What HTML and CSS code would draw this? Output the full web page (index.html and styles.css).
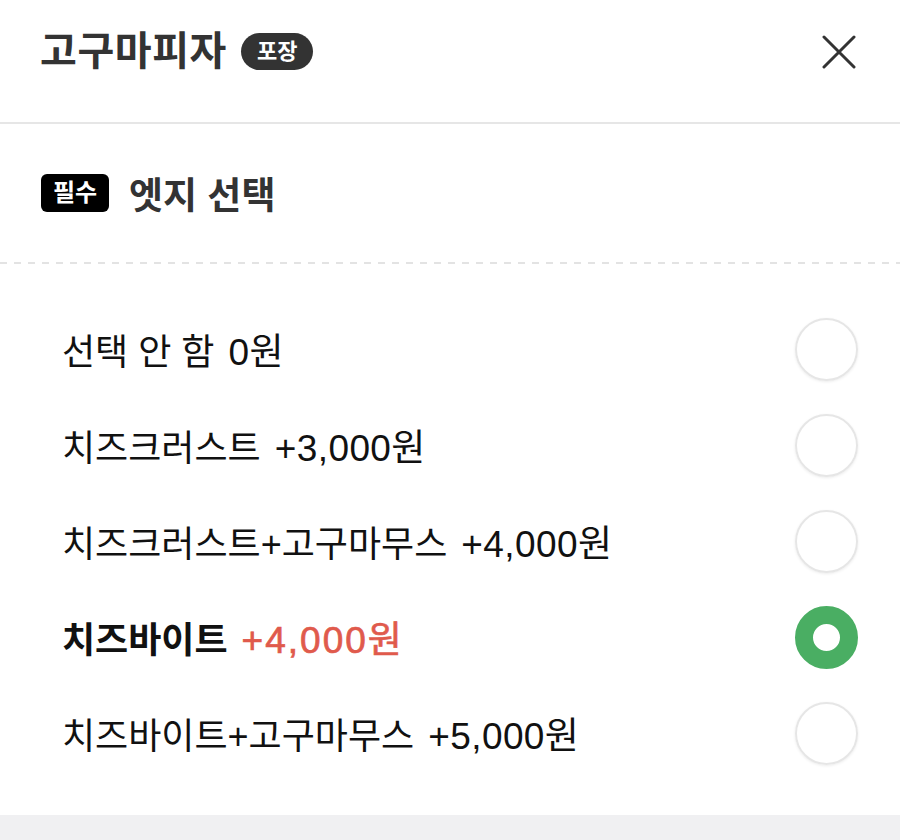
FILE: index.html
```html
<!DOCTYPE html>
<html lang="ko">
<head>
    <meta charset="UTF-8">
    <meta name="viewport" content="width=device-width, initial-scale=1.0">
    <title>고구마피자</title>
    <link rel="stylesheet" href="styles.css">
</head>
<body>

    <header class="sheet-header">
        <div class="title-wrap">
            <h1>고구마피자</h1>
            <span class="tag">포장</span>
        </div>
        <button class="close" aria-label="닫기">
            <svg width="34" height="34" viewBox="0 0 34 34">
                <path d="M2 2 L32 32 M32 2 L2 32" stroke="#333" stroke-width="3" stroke-linecap="round" fill="none"/>
            </svg>
        </button>
    </header>

    <section class="option-group">
        <div class="group-title">
            <span class="required">필수</span>
            <h2>엣지 선택</h2>
        </div>

        <div class="divider"></div>

        <!-- Edge options -->
        <ul class="option-list">
            <li class="option">
                <span class="label">선택 안 함 <span class="price">0원</span></span>
                <span class="radio"></span>
            </li>
            <li class="option">
                <span class="label">치즈크러스트 <span class="price">+3,000원</span></span>
                <span class="radio"></span>
            </li>
            <li class="option">
                <span class="label">치즈크러스트+고구마무스 <span class="price">+4,000원</span></span>
                <span class="radio"></span>
            </li>
            <li class="option selected">
                <span class="label">치즈바이트 <span class="price">+4,000원</span></span>
                <span class="radio"></span>
            </li>
            <li class="option">
                <span class="label">치즈바이트+고구마무스 <span class="price">+5,000원</span></span>
                <span class="radio"></span>
            </li>
        </ul>
    </section>

    <div class="footer-space"></div>

</body>
</html>
```

FILE: styles.css
```css
body {
    font-family: "Liberation Sans", "Noto Sans CJK KR", sans-serif;
    background-color: #fff;
    color: #111;
    margin: 0;
    padding: 0;
}
.sheet-header {
    height: 122px;
    display: flex;
    align-items: center;
    justify-content: space-between;
    padding: 0 44px 0 40px;
    border-bottom: 2px solid #e6e6e6;
    box-sizing: content-box;
}
.title-wrap {
    display: flex;
    align-items: center;
    gap: 14px;
    margin-top: -20px;
}
.title-wrap h1 {
    margin: 0;
    font-size: 40px;
    font-weight: 700;
    color: #333;
    line-height: 1.2;
    letter-spacing: 0.6px;
}
.tag {
    background-color: #333;
    color: #fff;
    font-size: 22px;
    font-weight: 700;
    padding: 0 16px;
    height: 37px;
    line-height: 37px;
    border-radius: 19px;
}
.close {
    background: none;
    border: none;
    padding: 0;
    margin-top: -18px;
    cursor: pointer;
    display: flex;
}
.option-group {
    padding-top: 50px;
}
.group-title {
    display: flex;
    align-items: center;
    gap: 20px;
    padding-left: 41px;
    height: 38px;
}
.required {
    background-color: #000;
    color: #fff;
    font-size: 24px;
    font-weight: 700;
    width: 68px;
    height: 38px;
    line-height: 38px;
    text-align: center;
    border-radius: 6px;
}
.group-title h2 {
    margin: 0;
    font-size: 37px;
    font-weight: 700;
    color: #333;
}
.divider {
    height: 2px;
    margin-top: 50px;
    background-image: linear-gradient(to right, #e3e3e3 7px, transparent 7px);
    background-size: 14px 2px;
}
.option-list {
    list-style: none;
    margin: 0;
    padding: 37px 42px 34px 62px;
}
.option {
    height: 96px;
    display: flex;
    align-items: center;
    justify-content: space-between;
    font-size: 36px;
}
.option .price {
    margin-left: 4px;
    font-size: 37px;
    letter-spacing: 0.4px;
}
.radio {
    width: 59px;
    height: 59px;
    border: 2px solid #e6e6e6;
    border-radius: 50%;
    box-shadow: 0 1px 3px rgba(0, 0, 0, 0.08);
}
.option.selected .label {
    font-weight: 700;
}
.option.selected .price {
    color: #e05a4c;
    font-weight: 400;
    letter-spacing: 2px;
    -webkit-text-stroke: 0.7px #e05a4c;
}
.option.selected .radio {
    width: 27px;
    height: 27px;
    border: 18px solid #4aae63;
    box-shadow: none;
}
.footer-space {
    height: 40px;
    background-color: #f0f0f2;
}
```
